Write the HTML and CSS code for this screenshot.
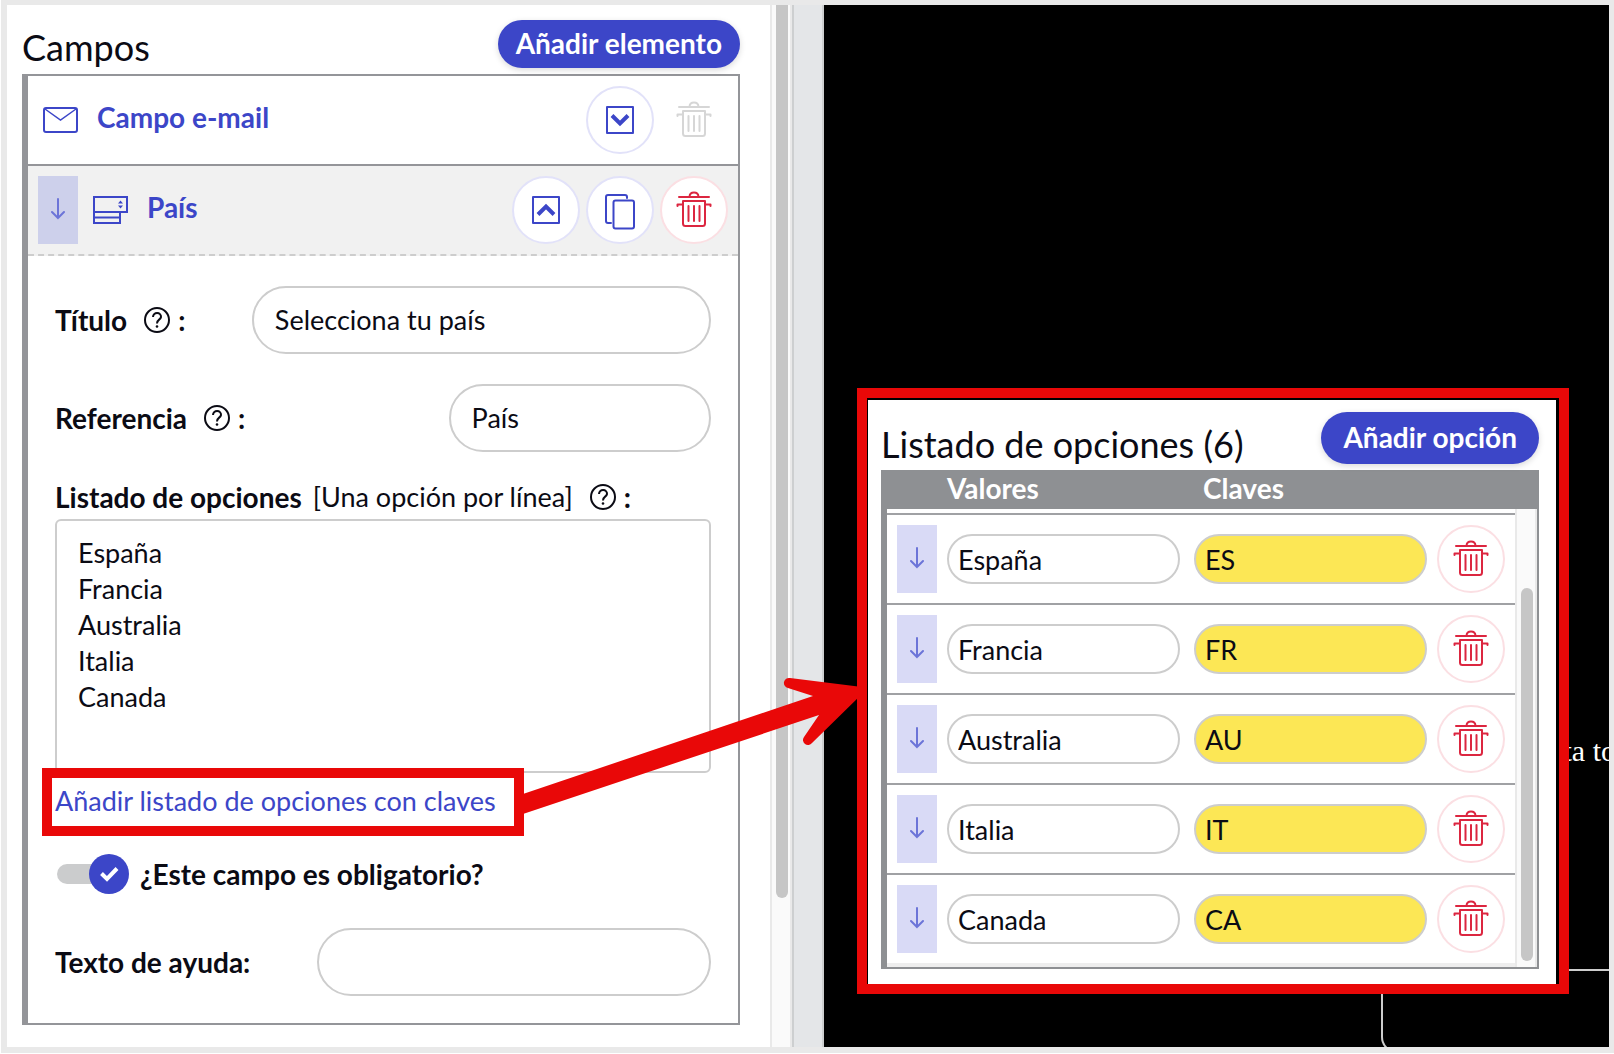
FILE: index.html
```html
<!DOCTYPE html>
<html lang="es">
    <head>
        <meta charset="utf-8">
        <title>Campos</title>
        <link rel="stylesheet" href="styles.css">
    </head>
    <body>
        <!-- icons shared by the buttons -->
        <svg class="sprite" width="0" height="0">
            <symbol id="trash" viewBox="0 0 36 38">
                <g fill="none" stroke="currentColor" stroke-width="2" stroke-linecap="round" stroke-linejoin="round">
                    <path d="M3 6H33M13.500 5.500C14 0 22 0 22.500 5.500M7 10H29V32.500Q29 35 26.500 35H9.500Q7 35 7 32.500ZM7 13.500H1.500V15M29 13.500H34.500V15"/>
                    <path d="M12.500 15V30M18 15V30M23.500 15V30"/>
                </g>
            </symbol>
            <symbol id="arrow" viewBox="0 0 14 22">
                <path d="M7 1V20M1 14L7 20L13 14" fill="none" stroke="currentColor" stroke-width="2" stroke-linecap="round"/>
            </symbol>
            <symbol id="down" viewBox="0 0 28 28">
                <path d="M1 1H27V27H1Z" fill="none" stroke="currentColor" stroke-width="2" stroke-linejoin="round"/>
                <path d="M6 9.500L14 17.500L22 9.500" fill="none" stroke="currentColor" stroke-width="4"/>
            </symbol>
            <symbol id="up" viewBox="0 0 28 28">
                <path d="M1 1H27V27H1Z" fill="none" stroke="currentColor" stroke-width="2" stroke-linejoin="round"/>
                <path d="M6 18.500L14 10.500L22 18.500" fill="none" stroke="currentColor" stroke-width="4"/>
            </symbol>
            <symbol id="copy" viewBox="0 0 30 36">
                <path d="M22 4V3Q22 1 20 1H3Q1 1 1 3V27Q1 29 3 29H6" fill="none" stroke="currentColor" stroke-width="2" stroke-linecap="round"/>
                <rect x="8.500" y="6.500" width="20.500" height="28" rx="2" fill="none" stroke="currentColor" stroke-width="2"/>
            </symbol>
            <symbol id="help" viewBox="0 0 26 26">
                <circle cx="13" cy="13" r="12" fill="none" stroke="currentColor" stroke-width="2"/>
                <path d="M9 10C9 4.500 17.500 5 17 10C16.500 13 13 12.500 13 16.500" fill="none" stroke="currentColor" stroke-width="2"/>
                <circle cx="13" cy="19.500" r="1.300" fill="currentColor"/>
            </symbol>
        </svg>

        <div class="frame">
            <div class="editor">
                <div class="title-row">
                    <h1>Campos</h1>
                    <button type="button" class="pill">Añadir elemento</button>
                </div>

                <div class="fields">
                    <div class="field-head">
                        <svg class="type-icon" viewBox="0 0 35 28" width="35" height="28">
                            <rect x="1" y="2" width="33" height="24" rx="2" fill="none" stroke="currentColor" stroke-width="2"/>
                            <path d="M2 3L17.500 14L33 3" fill="none" stroke="currentColor" stroke-width="1.500"/>
                        </svg>
                        <h2>Campo e-mail</h2>
                        <button type="button" class="round" aria-label="Abrir"><svg width="28" height="28"><use href="#down"/></svg></button>
                        <button type="button" class="round off" aria-label="Eliminar" disabled><svg width="36" height="38"><use href="#trash"/></svg></button>
                    </div>
                    <div class="field-head open">
                        <span class="handle"><svg width="14" height="22"><use href="#arrow"/></svg></span>
                        <svg class="type-icon" viewBox="0 0 35 28" width="35" height="28">
                            <path d="M1 1H34V16H1ZM1 16V27H27V16M1 21.500H27" fill="none" stroke="currentColor" stroke-width="2"/>
                            <path d="M27.500 4.500L30 7.500H25ZM27.500 12.500L30 9.500H25Z" fill="currentColor"/>
                        </svg>
                        <h2>País</h2>
                        <button type="button" class="round" aria-label="Cerrar"><svg width="28" height="28"><use href="#up"/></svg></button>
                        <button type="button" class="round copy" aria-label="Duplicar"><svg width="30" height="36"><use href="#copy"/></svg></button>
                        <button type="button" class="round red" aria-label="Eliminar"><svg width="36" height="38"><use href="#trash"/></svg></button>
                    </div>

                    <form class="field-body">
                        <div class="line">
                            <label for="titulo">Título <svg class="help" width="26" height="26"><use href="#help"/></svg>:</label>
                            <input type="text" id="titulo" class="wide" value="Selecciona tu país">
                        </div>
                        <div class="line">
                            <label for="referencia">Referencia <svg class="help" width="26" height="26"><use href="#help"/></svg>:</label>
                            <input type="text" id="referencia" class="narrow" value="País">
                        </div>
                        <label for="opciones" class="list-label">Listado de opciones <span>[Una opción por línea]</span> <svg class="help" width="26" height="26"><use href="#help"/></svg>:</label>
                        <textarea id="opciones">España
Francia
Australia
Italia
Canada</textarea>
                        <a href="#claves" class="marked">Añadir listado de opciones con claves</a>
                        <label class="switch">
                            <span class="toggle">
                                <input type="checkbox" checked>
                                <svg viewBox="0 0 40 40" width="40" height="40">
                                    <circle cx="20" cy="20" r="20" fill="#3c46c8"/>
                                    <path d="M12.500 19.500L18 25L28 14.500" fill="none" stroke="#fff" stroke-width="4"/>
                                </svg>
                            </span>
                            ¿Este campo es obligatorio?
                        </label>
                        <div class="line">
                            <label for="ayuda">Texto de ayuda:</label>
                            <input type="text" id="ayuda" class="medium">
                        </div>
                    </form>
                </div>
            </div>
            <div class="scrollbar"><div class="thumb"></div></div>
            <div class="splitter"></div>

            <div class="preview">
                <p>Completa to</p>
                <div class="preview-box"></div>

                <div class="popup" id="claves">
                    <div class="popup-inner">
                        <div class="title-row">
                            <h1>Listado de opciones (6)</h1>
                            <button type="button" class="pill">Añadir opción</button>
                        </div>
                        <div class="options">
                            <table>
                                <thead>
                                    <tr><th class="c-handle"></th><th class="c-value">Valores</th><th class="c-key">Claves</th><th class="c-delete"></th></tr>
                                </thead>
                                <tbody>
                                    <tr>
                                        <td><span class="handle"><svg width="14" height="22"><use href="#arrow"/></svg></span></td>
                                        <td><input type="text" aria-label="Valor" value="España"></td>
                                        <td><input type="text" aria-label="Clave" class="key" value="ES"></td>
                                        <td><button type="button" class="round red" aria-label="Eliminar"><svg width="36" height="38"><use href="#trash"/></svg></button></td>
                                    </tr>
                                    <tr>
                                        <td><span class="handle"><svg width="14" height="22"><use href="#arrow"/></svg></span></td>
                                        <td><input type="text" aria-label="Valor" value="Francia"></td>
                                        <td><input type="text" aria-label="Clave" class="key" value="FR"></td>
                                        <td><button type="button" class="round red" aria-label="Eliminar"><svg width="36" height="38"><use href="#trash"/></svg></button></td>
                                    </tr>
                                    <tr>
                                        <td><span class="handle"><svg width="14" height="22"><use href="#arrow"/></svg></span></td>
                                        <td><input type="text" aria-label="Valor" value="Australia"></td>
                                        <td><input type="text" aria-label="Clave" class="key" value="AU"></td>
                                        <td><button type="button" class="round red" aria-label="Eliminar"><svg width="36" height="38"><use href="#trash"/></svg></button></td>
                                    </tr>
                                    <tr>
                                        <td><span class="handle"><svg width="14" height="22"><use href="#arrow"/></svg></span></td>
                                        <td><input type="text" aria-label="Valor" value="Italia"></td>
                                        <td><input type="text" aria-label="Clave" class="key" value="IT"></td>
                                        <td><button type="button" class="round red" aria-label="Eliminar"><svg width="36" height="38"><use href="#trash"/></svg></button></td>
                                    </tr>
                                    <tr>
                                        <td><span class="handle"><svg width="14" height="22"><use href="#arrow"/></svg></span></td>
                                        <td><input type="text" aria-label="Valor" value="Canada"></td>
                                        <td><input type="text" aria-label="Clave" class="key" value="CA"></td>
                                        <td><button type="button" class="round red" aria-label="Eliminar"><svg width="36" height="38"><use href="#trash"/></svg></button></td>
                                    </tr>
                                </tbody>
                            </table>
                            <div class="scrollbar"><div class="thumb"></div></div>
                        </div>
                    </div>
                </div>
            </div>
        </div>

        <!-- arrow from the link to the options popup -->
        <svg class="pointer" viewBox="520 670 345 150" width="345" height="150">
            <path d="M520 795L813 696L788 688A5 5 0 0 1 790 678L862 687V694L812 743A5 5 0 0 1 804 737L819 715L520 815Z" fill="#e90808"/>
        </svg>
    </body>
</html>
```

FILE: styles.css
```css
* {
    box-sizing: border-box;
}
body {
    position: relative;
    margin: 0;
    padding: 0 0 1px 1px;
    background: #fff;
    color: #0b0b14;
    font-family: Lato, "Noto Sans", sans-serif;
    font-size: 27px;
    line-height: 36px;
}
.sprite {
    position: absolute;
}
svg {
    display: block;
    flex: none;
}
h1, h2, p {
    margin: 0;
}
button, input, textarea {
    font: inherit;
    color: inherit;
}

/* page frame */
.frame {
    display: grid;
    grid-template-columns: 763fr 22px 32px 785fr;
    min-height: calc(100vh - 1px);
    border: solid #e9e9e9;
    border-width: 5px 5px 6px 6px;
}
.editor {
    padding: 0 30px 22px 15px;
}
.scrollbar {
    padding: 0 4px;
    border: solid #e9e9e9;
    border-width: 0 2px;
    background: #fafafa;
}
.thumb {
    width: 12px;
    height: 893px;
    border-radius: 0 0 6px 6px;
    background: #c6c6c6;
}
.splitter {
    border: solid #cdcfd0;
    border-width: 0 2px;
    background: #e4e6e8;
}

/* headings and buttons */
.title-row {
    display: flex;
    justify-content: space-between;
    align-items: flex-start;
    padding: 15px 0 6px;
}
h1 {
    font-size: 36px;
    font-weight: 400;
    line-height: 54px;
    height: 48px;
}
.pill {
    height: 48px;
    padding: 0 18px 2px;
    border: none;
    border-radius: 26px;
    background: #3c46c8;
    color: #fff;
    font-size: 28px;
    font-weight: 700;
    box-shadow: 0 2px 6px rgba(0, 0, 0, 0.15);
    cursor: pointer;
}
.round {
    display: flex;
    align-items: center;
    justify-content: center;
    flex: none;
    width: 68px;
    height: 68px;
    padding: 0;
    border: 2px solid #e2e2f9;
    border-radius: 50%;
    background: #fff;
    color: #3c46c8;
    cursor: pointer;
}
.round.copy {
    padding-top: 4px;
}
.round.red {
    border-color: #fbdfe3;
    color: #dc2640;
}
.round.off {
    border-color: transparent;
    color: #d6d6d6;
}
.handle {
    display: flex;
    align-items: center;
    justify-content: center;
    flex: none;
    width: 40px;
    height: 68px;
    padding-bottom: 2px;
    background: #d9daf6;
    color: #6c74d8;
}

/* list of fields */
.fields {
    border: 2px solid #949599;
    border-left-width: 6px;
}
.field-head {
    display: flex;
    align-items: center;
    gap: 6px;
    height: 90px;
    padding: 0 10px 0 15px;
    border-bottom: 2px solid #949599;
    color: #3c46c8;
}
.field-head h2 {
    flex: 1;
    padding: 0 0 6px 13px;
    font-size: 28px;
    font-weight: 700;
}
.field-head.open {
    padding-left: 10px;
    border-bottom: 2px dashed #cdcdcd;
    background: #f1f1f1;
}
.open .handle {
    margin-right: 9px;
    background: #cdd0eb;
}
.field-body {
    padding: 30px 27px 27px;
}
.line {
    display: flex;
    align-items: center;
    justify-content: space-between;
    margin-bottom: 30px;
}
.line:last-child {
    margin-bottom: 0;
}
label {
    display: flex;
    align-items: center;
    font-size: 28px;
    font-weight: 700;
}
.help {
    margin: 0 8px 0 17px;
}
.line input {
    height: 68px;
    padding: 0 21px 2px;
    border: 2px solid #cdcdcd;
    border-radius: 34px;
    background: #fff;
}
.line .wide {
    width: 70%;
}
.line .medium {
    width: 60%;
}
.line .narrow {
    width: 40%;
}
.list-label {
    height: 37px;
    padding-bottom: 7px;
}
.list-label span {
    margin-left: 11px;
    font-size: 27px;
    font-weight: 400;
}
textarea {
    display: block;
    width: 100%;
    height: 254px;
    padding: 14px 21px;
    border: 2px solid #cdcdcd;
    border-radius: 6px;
    background: #fff;
    resize: none;
    overflow: hidden;
}
.marked {
    display: block;
    position: relative;
    width: 482px;
    margin: -5px 0 18px -13px;
    padding: 5px 3px 7px;
    border: 10px solid #e90808;
    background: #fff;
    color: #3c46c8;
    text-decoration: none;
    white-space: nowrap;
}
.switch {
    gap: 11px;
    margin-bottom: 34px;
}
.toggle {
    position: relative;
    width: 74px;
    height: 40px;
}
.toggle input {
    appearance: none;
    display: block;
    width: 60px;
    height: 20px;
    margin: 10px 2px;
    border-radius: 10px;
    background: #cbcccd;
}
.toggle svg {
    position: absolute;
    top: 0;
    right: 0;
}

/* preview of the form */
.preview {
    position: relative;
    display: flex;
    flex-direction: column;
    align-items: flex-end;
    overflow: hidden;
    padding-top: 728px;
    background: #000;
    color: #fff;
    font-family: "Liberation Serif", serif;
    font-size: 30px;
    white-space: nowrap;
}
.preview p {
    margin-right: -7px;
}
.preview-box {
    width: 248px;
    height: 84px;
    margin: 200px -20px -8px 0;
    border: 2px solid #cdcdcd;
    border-radius: 16px;
}

/* options with keys, over the preview */
.popup {
    position: absolute;
    top: 383px;
    left: 33px;
    right: 40px;
    padding: 2px 3px 0 1px;
    border: 10px solid #e90808;
    background: #000;
    color: #0b0b14;
    font-family: Lato, "Noto Sans", sans-serif;
    font-size: 27px;
}
.popup-inner {
    padding: 0 17px 15px 13px;
    background: #fff;
}
.popup .title-row {
    padding-top: 12px;
}
.popup h1, .popup .pill {
    height: 52px;
}
.popup h1 {
    line-height: 64px;
}
.popup .pill {
    padding: 0 22px 2px;
}
.options {
    display: flex;
    border: 2px solid #8e9093;
    border-left-width: 6px;
    background: #8e9093;
}
table {
    flex: 1;
    table-layout: fixed;
    border-spacing: 0;
    border-bottom: 4px solid #eee;
    background: #fff;
}
th {
    height: 41px;
    padding: 0 0 6px;
    border-bottom: 4px solid #fff;
    background: #8e9093;
    color: #fff;
    font-size: 28px;
    text-align: left;
    line-height: 30px;
}
.c-handle {
    width: 60px;
}
.c-value {
    width: 247px;
}
.c-key {
    padding-left: 9px;
}
.c-delete {
    width: 78px;
}
td {
    height: 90px;
    padding: 0;
    border-top: 2px solid #a0a1a4;
}
td .handle {
    margin-left: 10px;
}
td input {
    display: block;
    width: calc(100% - 14px);
    height: 50px;
    padding: 0 9px;
    border: 2px solid #cdcdcd;
    border-radius: 25px;
    background: #fff;
}
td .key {
    width: calc(100% - 10px);
    background: #fce755;
}
.options .scrollbar {
    width: 22px;
    margin-top: 37px;
    padding-top: 79px;
}
.options .thumb {
    height: 373px;
    border-radius: 6px;
}

/* red arrow */
.pointer {
    position: absolute;
    top: 670px;
    left: 520px;
}
```
